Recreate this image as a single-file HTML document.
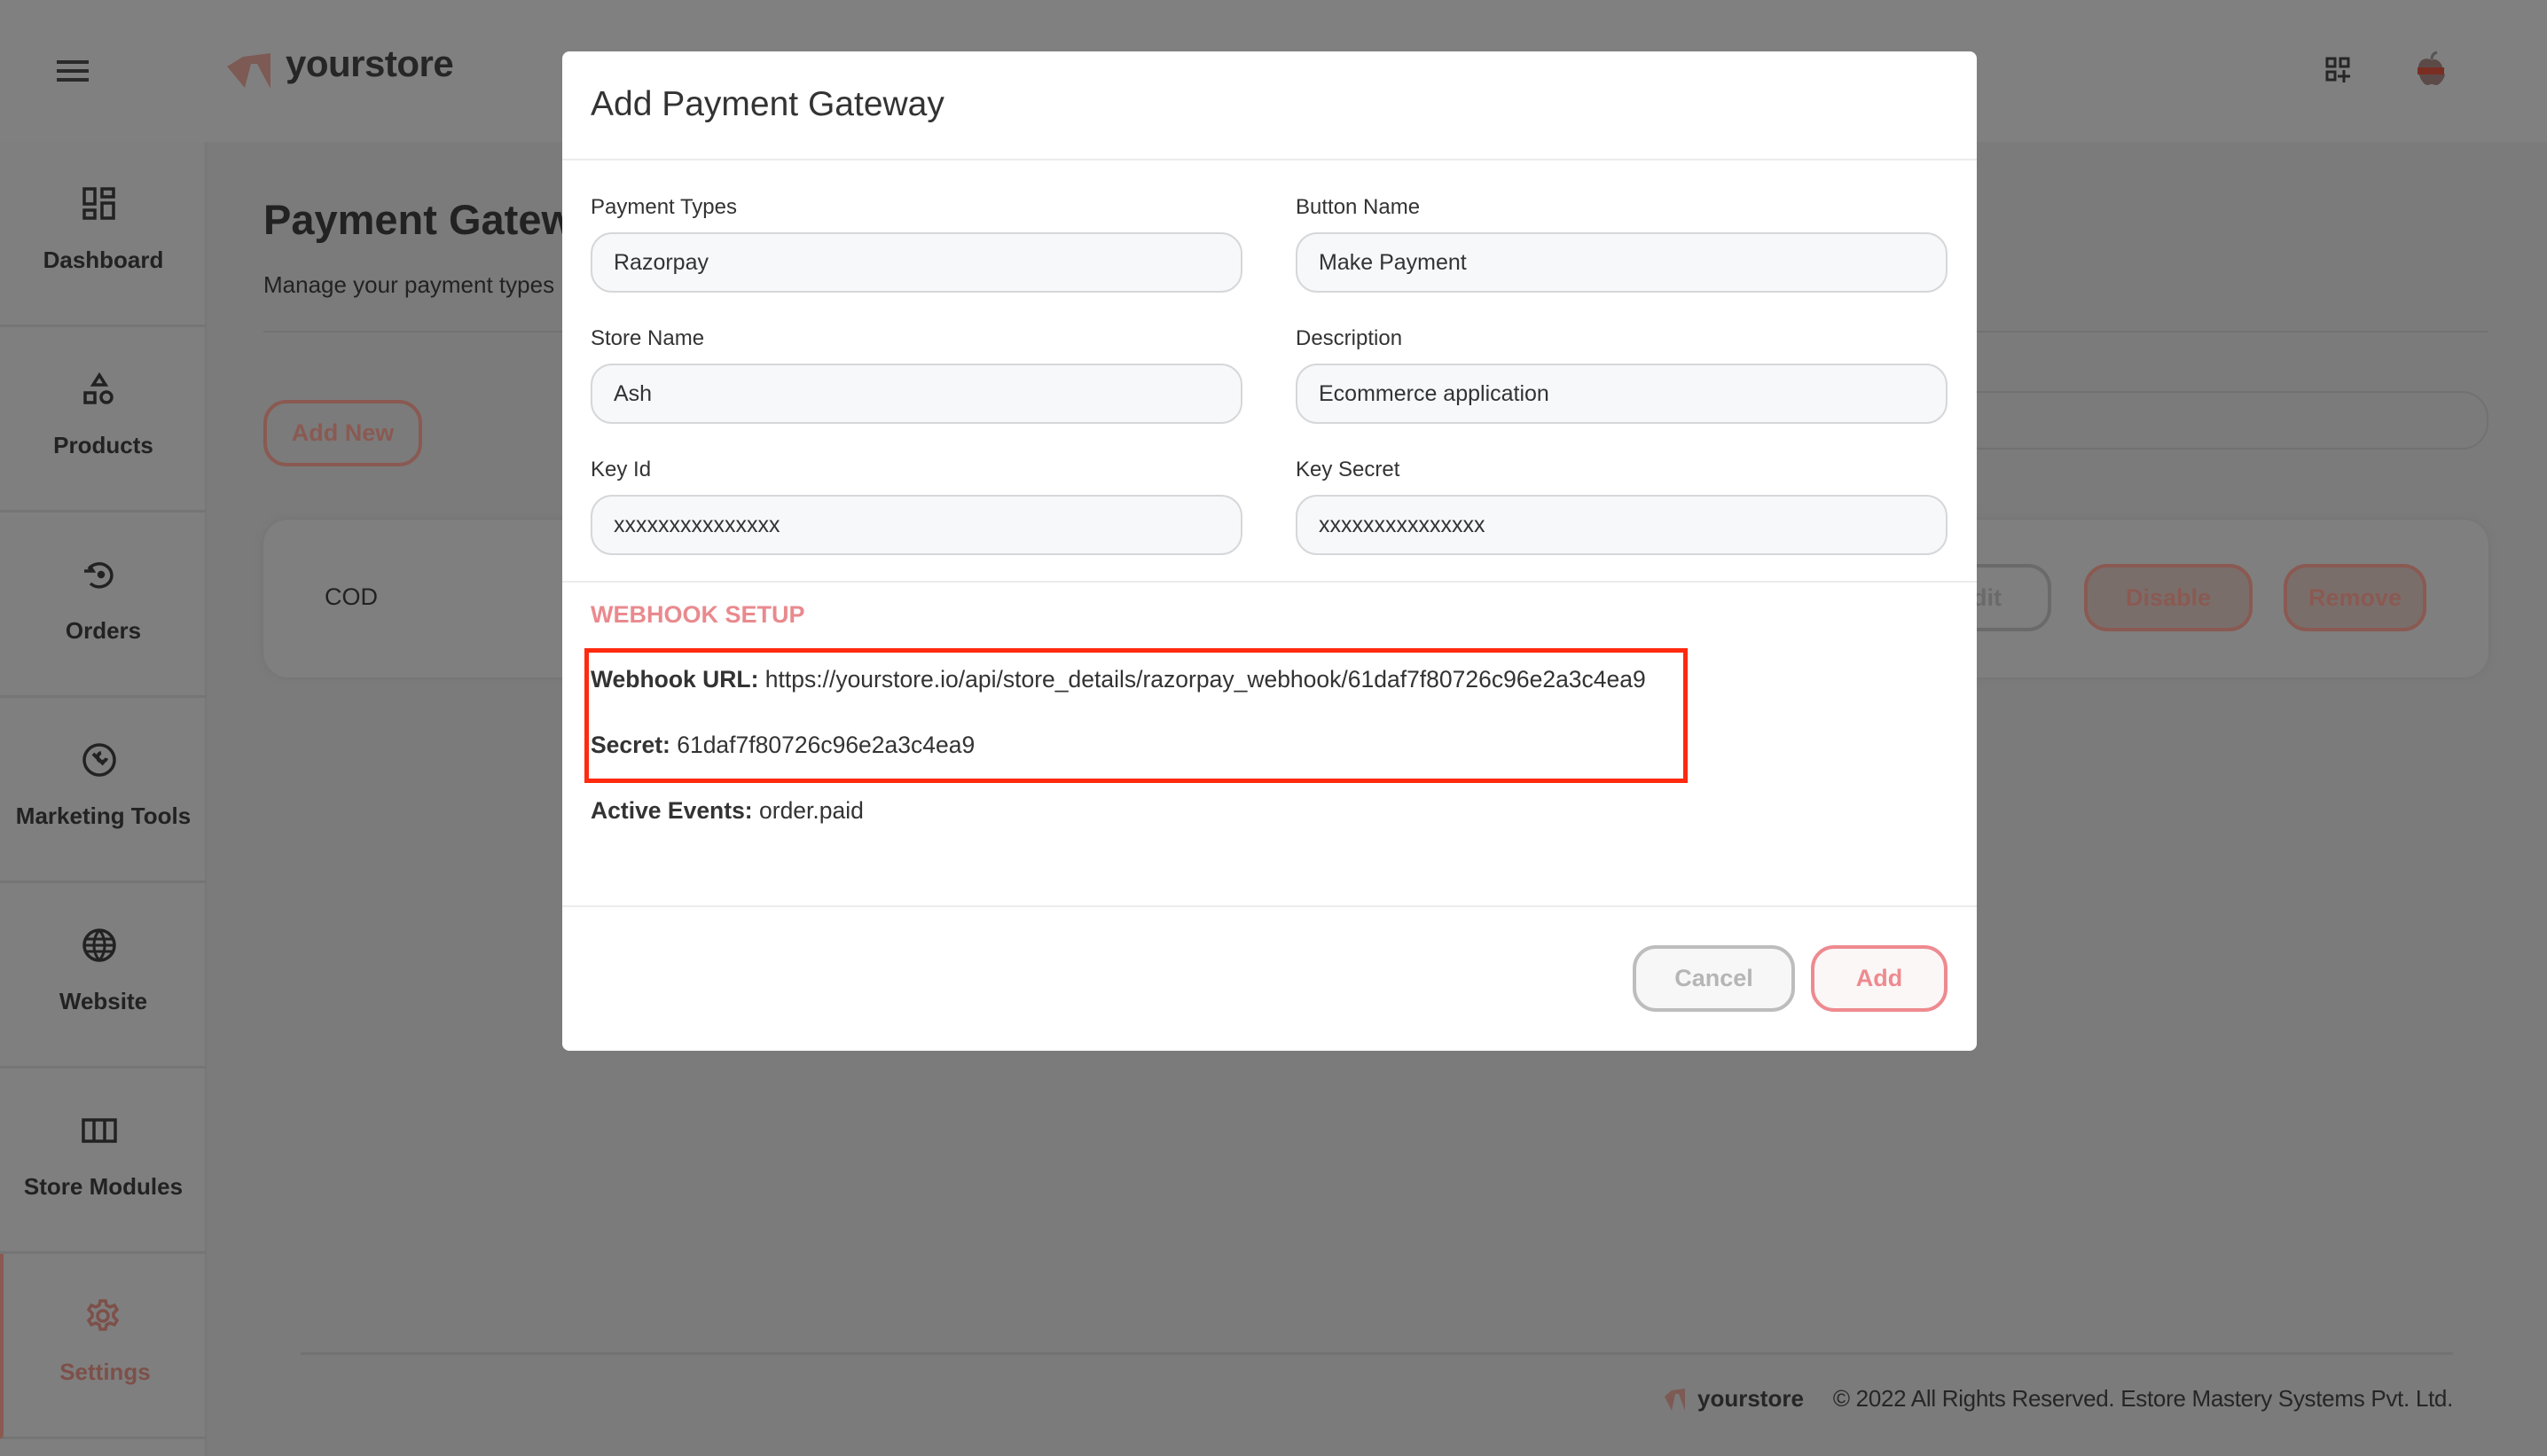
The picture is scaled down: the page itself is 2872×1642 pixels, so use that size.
<!DOCTYPE html>
<html><head><meta charset="utf-8"><style>
*{margin:0;padding:0;box-sizing:border-box}
body{width:2872px;height:1642px;position:relative;overflow:hidden;background:#7b7b7b;font-family:"Liberation Sans",sans-serif;color:#1f1f1f}
.a{position:absolute}
.hdr{left:0;top:0;width:2872px;height:160px;background:#808080}
.side{left:0;top:160px;width:233px;height:1482px;background:#7f7f7f;border-right:2px solid #777}
.sitem{position:absolute;left:0;width:233px;height:209px;border-bottom:3px solid #757575;text-align:center}
.sitem svg{position:absolute;left:92px;top:50px}
.sitem span{position:absolute;left:0;right:0;top:118px;font-weight:bold;font-size:26px;color:#222}
.modal{left:634px;top:58px;width:1595px;height:1127px;background:#fff;border-radius:8px}
.lbl{font-size:24px;color:#333}
.inp{height:68px;background:#f7f8fa;border:2px solid #d5d7da;border-radius:24px;font-size:25px;color:#333;padding-left:24px;line-height:64px}
.t27{font-size:26.5px;color:#333;white-space:nowrap}
</style></head><body>
<div class="a hdr"></div>
<div class="a" style="left:64px;top:68px;width:36px;height:4px;background:#2a2a2a"></div>
<div class="a" style="left:64px;top:78px;width:36px;height:4px;background:#2a2a2a"></div>
<div class="a" style="left:64px;top:88px;width:36px;height:4px;background:#2a2a2a"></div>
<svg class="a" style="left:250px;top:55px" width="60" height="50" viewBox="250 55 60 50"><polygon points="256,75 274,64 283,72 276,99" fill="#7d5a54"/><polygon points="274,64 305,60 305,100 290,72 283,72" fill="#7d5a54"/></svg>
<div class="a" style="left:322px;top:48px;font-size:42px;font-weight:bold;color:#262626;letter-spacing:-0.5px">yourstore</div>
<svg class="a" style="left:2622px;top:64px" width="30" height="30" viewBox="0 0 30 30" fill="none" stroke="#262626" stroke-width="3"><rect x="2" y="2" width="9" height="9"/><rect x="17" y="2" width="9" height="9"/><rect x="2" y="17" width="9" height="9"/><path d="M21 15v14M14 22h14"/></svg>
<svg class="a" style="left:2722px;top:56px" width="40" height="44" viewBox="0 0 40 44"><path d="M20 12c-4-3-14-3-15 8-1 10 6 20 10 20 2 0 3-1 5-1s3 1 5 1c4 0 9-7 10-12-4-1-5-5-3-9-2-6-8-10-12-7z" fill="#5b4a48"/><path d="M20 11c0-4 2-7 6-8" stroke="#555" stroke-width="3" fill="none"/><rect x="4" y="20" width="30" height="8" fill="#7a2e22"/></svg>
<div class="a side">
 <div class="sitem" style="top:0"><svg width="40" height="40" viewBox="0 0 40 40" fill="none" stroke="#222" stroke-width="3.5"><rect x="3" y="3" width="12" height="17"/><rect x="23" y="3" width="13" height="9"/><rect x="3" y="27" width="12" height="9"/><rect x="23" y="19" width="13" height="17"/></svg><span>Dashboard</span></div>
 <div class="sitem" style="top:209px"><svg width="40" height="40" viewBox="0 0 40 40" fill="none" stroke="#222" stroke-width="3.5"><path d="M20 4l7 11H13z"/><rect x="4" y="24" width="11" height="11"/><circle cx="28" cy="29" r="6"/></svg><span>Products</span></div>
 <div class="sitem" style="top:418px"><svg width="40" height="40" viewBox="0 0 40 40" fill="none" stroke="#222" stroke-width="3.5"><path d="M8 14A14 13 0 1 1 10 30"/><path d="M3 16h10l-4-6"/><circle cx="22" cy="20" r="2.5" fill="#222"/></svg><span>Orders</span></div>
 <div class="sitem" style="top:627px"><svg width="40" height="40" viewBox="0 0 40 40" fill="none" stroke="#222" stroke-width="3.5"><circle cx="20" cy="20" r="17"/><path d="M13 13l12 12M22 12a5 5 0 1 0 6 6" stroke-width="4"/></svg><span>Marketing Tools</span></div>
 <div class="sitem" style="top:836px"><svg width="40" height="40" viewBox="0 0 40 40" fill="none" stroke="#222" stroke-width="3.5"><circle cx="20" cy="20" r="17"/><path d="M3 20h34M20 3c-8 9-8 25 0 34M20 3c8 9 8 25 0 34M5 13h30M5 27h30" stroke-width="3"/></svg><span>Website</span></div>
 <div class="sitem" style="top:1045px"><svg width="40" height="40" viewBox="0 0 40 40" fill="none" stroke="#222" stroke-width="3.5"><rect x="2" y="8" width="36" height="24"/><path d="M14 8v24M26 8v24"/></svg><span>Store Modules</span></div>
 <div class="sitem" style="top:1254px;border-left:4px solid #8a5a52"><svg width="40" height="40" viewBox="0 0 40 40" fill="none" stroke="#7d5049" stroke-width="3.5"><circle cx="20" cy="20" r="6"/><path d="M17 3h6l1 5 4 2 5-2 3 5-4 4v4l4 4-3 5-5-2-4 2-1 5h-6l-1-5-4-2-5 2-3-5 4-4v-4l-4-4 3-5 5 2 4-2z"/></svg><span style="color:#7d5049">Settings</span></div>
</div>
<div class="a" style="left:297px;top:220px;font-size:47px;font-weight:bold;color:#222">Payment Gateway</div>
<div class="a" style="left:297px;top:306px;font-size:26px;color:#222">Manage your payment types</div>
<div class="a" style="left:297px;top:373px;width:2509px;height:2px;background:#717171"></div>
<div class="a" style="left:297px;top:451px;width:179px;height:75px;border:4px solid #8a5a52;border-radius:26px;font-weight:bold;font-size:27px;color:#8a5a52;text-align:center;line-height:67px">Add New</div>
<div class="a" style="left:2100px;top:441px;width:706px;height:66px;border:2px solid #717171;border-radius:30px"></div>
<div class="a" style="left:297px;top:586px;width:2509px;height:178px;background:#7f7f7f;border-radius:28px;box-shadow:0 0 8px #727272"></div>
<div class="a" style="left:366px;top:658px;font-size:27px;color:#222">COD</div>
<div class="a" style="left:2150px;top:636px;width:163px;height:76px;border:4px solid #6a6a6a;border-radius:26px;font-weight:bold;font-size:27px;color:#6a6a6a;text-align:center;line-height:68px">Edit</div>
<div class="a" style="left:2350px;top:636px;width:190px;height:76px;border:4px solid #8a5a52;border-radius:26px;background:#7a6e6b;font-weight:bold;font-size:27px;color:#8a5a52;text-align:center;line-height:68px">Disable</div>
<div class="a" style="left:2575px;top:636px;width:161px;height:76px;border:4px solid #8a5a52;border-radius:26px;background:#7a6e6b;font-weight:bold;font-size:27px;color:#8a5a52;text-align:center;line-height:68px">Remove</div>
<div class="a" style="left:339px;top:1525px;width:2427px;height:3px;background:#727272"></div>
<svg class="a" style="left:1875px;top:1563px" width="30" height="30" viewBox="0 0 30 30"><polygon points="2,12 10,5 14,9 10,28" fill="#7d5a54"/><polygon points="10,5 25,3 25,28 18,9 14,9" fill="#7d5a54"/></svg>
<div class="a" style="left:1914px;top:1562px;font-size:26px;font-weight:bold;color:#262626">yourstore</div>
<div class="a" style="left:1900px;top:1562px;font-size:26px;color:#262626;width:866px;text-align:right;white-space:nowrap;letter-spacing:-0.3px">© 2022 All Rights Reserved. Estore Mastery Systems Pvt. Ltd.</div>

<div class="a modal">
 <div class="a" style="left:32px;top:38px;font-size:39px;color:#333">Add Payment Gateway</div>
 <div class="a" style="left:0;top:121px;width:1595px;height:2px;background:#ececec"></div>
 <div class="a lbl" style="left:32px;top:162px">Payment Types</div>
 <div class="a lbl" style="left:827px;top:162px">Button Name</div>
 <div class="a inp" style="left:32px;top:204px;width:735px">Razorpay</div>
 <div class="a inp" style="left:827px;top:204px;width:735px">Make Payment</div>
 <div class="a lbl" style="left:32px;top:310px">Store Name</div>
 <div class="a lbl" style="left:827px;top:310px">Description</div>
 <div class="a inp" style="left:32px;top:352px;width:735px">Ash</div>
 <div class="a inp" style="left:827px;top:352px;width:735px">Ecommerce application</div>
 <div class="a lbl" style="left:32px;top:458px">Key Id</div>
 <div class="a lbl" style="left:827px;top:458px">Key Secret</div>
 <div class="a inp" style="left:32px;top:500px;width:735px">xxxxxxxxxxxxxxx</div>
 <div class="a inp" style="left:827px;top:500px;width:735px">xxxxxxxxxxxxxxx</div>
 <div class="a" style="left:0;top:597px;width:1595px;height:2px;background:#ececec"></div>
 <div class="a" style="left:32px;top:620px;font-size:27px;font-weight:bold;color:#e98a8e">WEBHOOK SETUP</div>
 <div class="a" style="left:25px;top:673px;width:1244px;height:152px;border:5px solid #ff2a0f"></div>
 <div class="a t27" style="left:32px;top:693px"><b>Webhook URL:</b> https://yourstore.io/api/store_details/razorpay_webhook/61daf7f80726c96e2a3c4ea9</div>
 <div class="a t27" style="left:32px;top:767px"><b>Secret:</b> 61daf7f80726c96e2a3c4ea9</div>
 <div class="a t27" style="left:32px;top:841px"><b>Active Events:</b> order.paid</div>
 <div class="a" style="left:0;top:963px;width:1595px;height:2px;background:#ececec"></div>
 <div class="a" style="left:1207px;top:1008px;width:183px;height:75px;border:4px solid #bdbdbd;border-radius:26px;background:#f7f7f7;font-weight:bold;font-size:27px;color:#b5b5b5;text-align:center;line-height:67px">Cancel</div>
 <div class="a" style="left:1408px;top:1008px;width:154px;height:75px;border:4px solid #ee8a8f;border-radius:26px;background:#fbf7f7;font-weight:bold;font-size:27px;color:#ee8a8f;text-align:center;line-height:67px">Add</div>
</div>
</body></html>
